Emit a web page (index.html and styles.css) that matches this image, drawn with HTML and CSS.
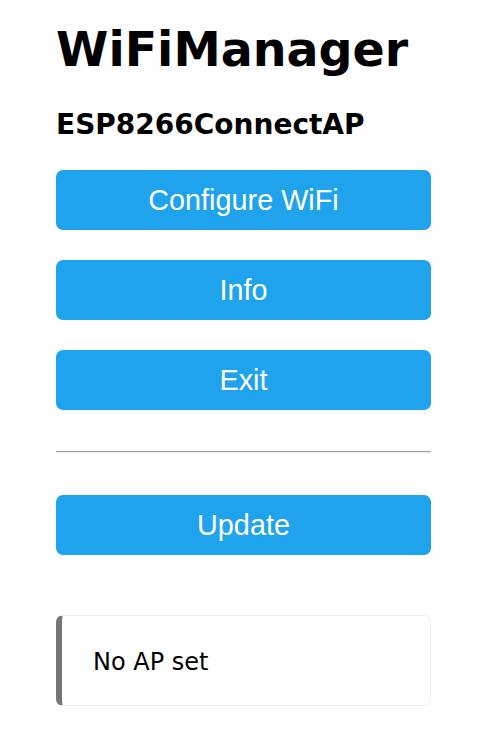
FILE: index.html
```html
<!DOCTYPE html>
<html>
<head>
<meta charset="utf-8">
<link rel="stylesheet" href="styles.css">
</head>
<body>
<div class="wrap">
  <h1 class="title">WiFiManager</h1>
  <h3 class="subtitle">ESP8266ConnectAP</h3>
  <div class="menu">
    <button class="btn">Configure WiFi</button>
    <button class="btn">Info</button>
    <button class="btn">Exit</button>
  </div>
  <hr class="sep">
  <button class="btn">Update</button>
  <div class="msg">No AP set</div>
</div>
</body>
</html>
```
FILE: styles.css
```css
html, body {
  margin: 0;
  padding: 0;
  background: #fff;
}
body {
  font-family: "DejaVu Sans", Verdana, sans-serif;
  color: #000;
}
.wrap {
  width: 375px;
  margin-left: 56px;
  padding-top: 20px;
  display: flex;
  flex-direction: column;
}
.title {
  margin: 0;
  font-size: 47.5px;
  line-height: 59px;
  font-weight: bold;
}
.subtitle {
  margin: 31px 0 0;
  font-size: 28px;
  line-height: 30px;
  font-weight: bold;
}
.menu {
  margin-top: 30px;
  display: flex;
  flex-direction: column;
  gap: 30px;
}
.btn {
  display: block;
  width: 100%;
  height: 60px;
  border: 0;
  padding: 0;
  border-radius: 7px;
  background: #1fa3ec;
  color: #fff;
  font-family: "Liberation Sans", Arial, sans-serif;
  font-size: 28.8px;
  line-height: 58px;
  cursor: pointer;
}
.sep {
  margin: 41px 0 42px;
  height: 0;
  border: 0;
  border-top: 1px solid #9a9a9a;
  border-bottom: 1px solid #eee;
}
.msg {
  margin-top: 60px;
  border: 1px solid #eee;
  border-left: 6px solid #777;
  border-radius: 7px;
  padding: 31px 20px 28px 31px;
  font-size: 24px;
  line-height: 30px;
}
```
